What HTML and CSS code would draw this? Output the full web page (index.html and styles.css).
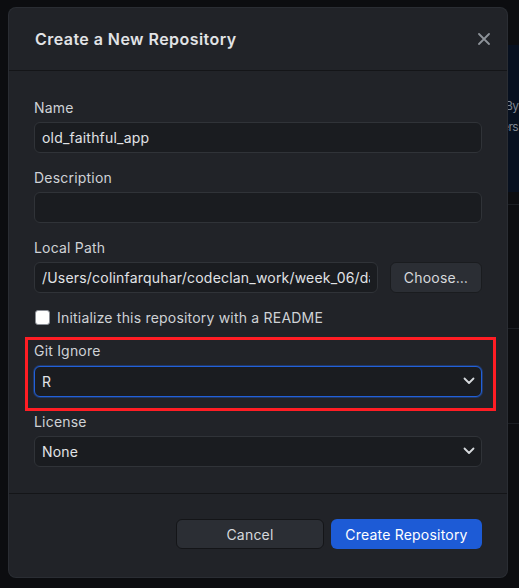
FILE: index.html
```html
<!DOCTYPE html>
<html lang="en">
<head>
<meta charset="utf-8">
<title>Create a New Repository</title>
<link rel="stylesheet" href="styles.css">
</head>
<body>
<div class="backdrop">
  <div class="bd-panel">
    <span class="bd-line1">By</span>
    <span class="bd-line2">ers</span>
  </div>
  <div class="bd-rule r1"></div>
  <div class="bd-rule r2"></div>
  <div class="bd-rule r3"></div>
</div>

<div class="dialog">
  <header class="dlg-header">
    <h1 class="dlg-title">Create a New Repository</h1>
    <button class="close-btn" aria-label="Close">
      <svg width="12" height="12" viewBox="0 0 12 12"><path d="M1 1 L11 11 M11 1 L1 11" stroke="#8d9299" stroke-width="1.8" stroke-linecap="round" fill="none"/></svg>
    </button>
  </header>

  <div class="dlg-body">
    <div class="field">
      <label class="label">Name</label>
      <input class="text-input" type="text" value="old_faithful_app" readonly>
    </div>
    <div class="field">
      <label class="label">Description</label>
      <input class="text-input" type="text" value="" readonly>
    </div>
    <div class="field">
      <label class="label">Local Path</label>
      <div class="path-row">
        <input class="text-input path-input" type="text" value="/Users/colinfarquhar/codeclan_work/week_06/day_5" readonly>
        <button class="btn choose-btn">Choose…</button>
      </div>
    </div>
    <div class="check-row">
      <span class="checkbox"></span>
      <span class="check-label">Initialize this repository with a README</span>
    </div>
    <div class="highlight">
      <div class="field">
        <label class="label">Git Ignore</label>
        <div class="select focused"><span>R</span>
          <svg class="chev" width="12" height="8" viewBox="0 0 12 8"><path d="M1.5 1.5 L6 6 L10.5 1.5" stroke="#d6d9dd" stroke-width="1.8" fill="none" stroke-linecap="round" stroke-linejoin="round"/></svg>
        </div>
      </div>
    </div>
    <div class="field license">
      <label class="label">License</label>
      <div class="select"><span>None</span>
        <svg class="chev" width="12" height="8" viewBox="0 0 12 8"><path d="M1.5 1.5 L6 6 L10.5 1.5" stroke="#d6d9dd" stroke-width="1.8" fill="none" stroke-linecap="round" stroke-linejoin="round"/></svg>
      </div>
    </div>
  </div>

  <footer class="dlg-footer">
    <button class="btn cancel-btn">Cancel</button>
    <button class="btn primary-btn">Create Repository</button>
  </footer>
</div>
</body>
</html>
```

FILE: styles.css
```css
* { box-sizing: border-box; }
html, body { margin: 0; padding: 0; }
body {
  background: #0c0d10;
  width: 519px;
  height: 588px;
  overflow: hidden;
  font-family: "Inter", "Noto Sans", sans-serif;
  padding: 8px 0 0 9px;
  position: relative;
}
.backdrop { position: absolute; inset: 0; z-index: 0; }
.bd-panel {
  position: absolute;
  left: 500px; top: 45px;
  width: 19px; height: 147px;
  background: #07101f;
  color: #7d8590;
  font-size: 12px;
  letter-spacing: -0.6px;
}
.bd-line1 { position: absolute; left: 5px; top: 53px; }
.bd-line2 { position: absolute; left: 2px; top: 74px; }
.bd-rule { position: absolute; left: 500px; width: 19px; height: 1px; background: #1b1e23; }
.r1 { top: 204px; }
.r2 { top: 328px; }
.r3 { top: 423px; }

.dialog {
  position: relative;
  z-index: 1;
  width: 498px;
  height: 569px;
  background: #212328;
  border-radius: 7px;
  display: flex;
  flex-direction: column;
  box-shadow: 0 0 0 1px #2a2d33;
}
.dlg-header {
  height: 63px;
  flex: none;
  border-bottom: 1px solid #141518;
  display: flex;
  align-items: center;
  justify-content: space-between;
  padding: 0 17px 0 26px;
}
.dlg-title {
  margin: 0;
  font-size: 16px;
  font-weight: 600;
  color: #e1e3e6;
  letter-spacing: 0.45px;
}
.close-btn {
  background: none; border: 0; padding: 0; width: 12px; height: 12px;
  display: flex;
}
.dlg-body {
  flex: 1;
  padding: 28px 25px 0 25px;
  display: flex;
  flex-direction: column;
  border-bottom: 1px solid #141518;
}
.field { display: flex; flex-direction: column; gap: 6px; margin-bottom: 16px; }
.label { font-size: 14px; line-height: 17px; color: #cfd2d6; letter-spacing: 0.2px; }
.text-input, .select {
  height: 31px;
  width: 100%;
  background: #1a1c20;
  border: 1px solid #303338;
  border-radius: 6px;
  color: #e1e3e6;
  font-family: inherit;
  font-size: 14px;
  letter-spacing: 0.2px;
  padding: 0 7px;
  outline: none;
}
.path-row { display: flex; gap: 12px; }
.path-input { flex: 1; min-width: 0; }
.btn {
  font-family: inherit;
  font-size: 14px;
  letter-spacing: 0.2px;
  border-radius: 6px;
  height: 30px;
  cursor: default;
}
.choose-btn {
  width: 92px;
  height: 31px;
  flex: none;
  background: #2b2e34;
  border: 1px solid #1a1c1f;
  color: #d6d9dc;
}
.check-row { display: flex; align-items: center; gap: 7px; height: 17px; margin-bottom: 11px; margin-left: 1px; }
.checkbox { width: 15px; height: 15px; background: #fff; border-radius: 3px; border: 1px solid #8b8f96; }
.check-label { font-size: 14px; color: #cfd2d6; letter-spacing: 0.2px; }
.highlight {
  margin: 0 -14px 0 -9px;
  padding: 1.5px 11px 11px 6px;
  border: 3.5px solid #ff1d24;
}
.highlight .field { margin-bottom: 0; gap: 7px; }
.select {
  display: flex; align-items: center; justify-content: space-between;
  padding: 0 6px 0 7px;
}
.select.focused { border-color: #2260d9; box-shadow: 0 0 0 1px rgba(34,96,217,0.35); }
.license { margin-top: 2px; }
.dlg-footer {
  height: 83px;
  flex: none;
  display: flex;
  justify-content: flex-end;
  align-items: flex-start;
  padding: 25px 25px 0 0;
  gap: 7px;
}
.cancel-btn {
  width: 148px;
  background: #2b2e34;
  border: 1px solid #141518;
  color: #d6d9dc;
}
.primary-btn {
  width: 151px;
  background: #1d5bd6;
  border: 0;
  color: #ffffff;
}
```
